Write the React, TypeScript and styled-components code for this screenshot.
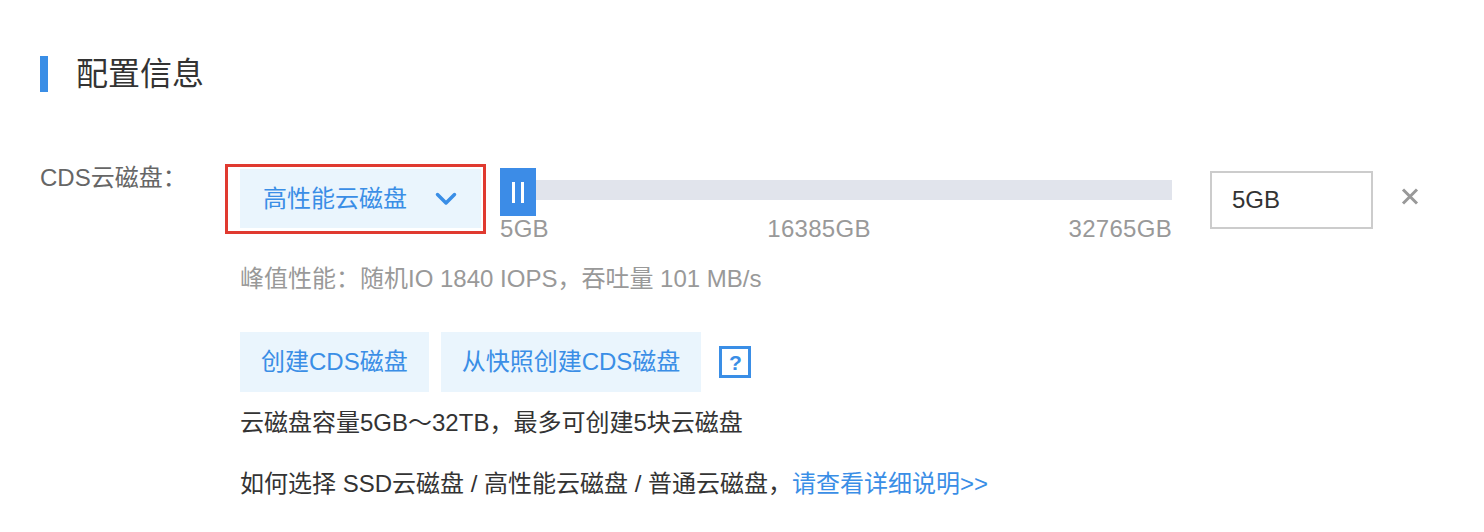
import styled, { createGlobalStyle } from "styled-components";

const GlobalStyle = createGlobalStyle`
  html, body {
    margin: 0;
    padding: 0;
    background: #fff;
  }
  body {
    font-family: "Liberation Sans", "Noto Sans CJK SC", sans-serif;
    color: #333;
  }
  * {
    box-sizing: border-box;
  }
`;

const BLUE = "#3a8ee6";
const LIGHT = "#eaf5fd";

const Page = styled.div`
  padding: 56px 0 0 40px;
  width: 1484px;
  height: 532px;
  overflow: hidden;
`;

const SectionTitle = styled.div`
  display: flex;
  align-items: center;
  gap: 28px;
  height: 36px;
`;

const TitleBar = styled.span`
  width: 8px;
  height: 36px;
  background: ${BLUE};
`;

const TitleText = styled.h2`
  margin: 0;
  font-size: 32px;
  line-height: 36px;
  font-weight: normal;
  color: #333;
`;

const Form = styled.div`
  display: grid;
  grid-template-columns: 200px 1fr;
  margin-top: 76px;
`;

const Label = styled.div`
  font-size: 24px;
  line-height: 20px;
  color: #666;
`;

const Field = styled.div`
  display: flex;
  flex-direction: column;
`;

const DiskRow = styled.div`
  display: flex;
  align-items: flex-start;
`;

const SelectWrap = styled.div`
  position: relative;
  margin-top: 1px;

  &::after {
    content: "";
    position: absolute;
    top: -5px;
    right: -5px;
    bottom: -6px;
    left: -15px;
    border: 3px solid #e03a30;
    pointer-events: none;
  }
`;

const Select = styled.div`
  width: 241px;
  height: 59px;
  padding: 0 24px 0 23px;
  display: flex;
  align-items: center;
  justify-content: space-between;
  background: ${LIGHT};
  color: ${BLUE};
  font-size: 24px;
  line-height: 30px;
  cursor: pointer;
`;

const Slider = styled.div`
  width: 672px;
  margin-left: 19px;
  display: flex;
  flex-direction: column;
`;

const TrackArea = styled.div`
  position: relative;
  height: 48px;
`;

const Track = styled.div`
  margin-top: 12px;
  height: 20px;
  background: #e1e4ec;
`;

const Handle = styled.div`
  position: absolute;
  left: 0;
  top: 0;
  width: 36px;
  height: 48px;
  background: #3c8ce7;
  display: flex;
  align-items: center;
  justify-content: center;
  gap: 6px;
`;

const Grip = styled.span`
  width: 3px;
  height: 21px;
  background: #fff;
`;

const Scale = styled.div`
  display: grid;
  grid-template-columns: 1fr auto 1fr;
  font-size: 24px;
  line-height: 26px;
  color: #999;
`;

const Tick = styled.span<{ $align: "left" | "center" | "right" }>`
  text-align: ${(p) => p.$align};
  margin-right: ${(p) => (p.$align === "center" ? "34px" : "0")};
  letter-spacing: 0.3px;
`;

const SizeInput = styled.input`
  width: 163px;
  height: 58px;
  margin: 3px 0 0 38px;
  padding: 0 0 0 20px;
  border: 2px solid #ccc;
  border-radius: 0;
  outline: none;
  font-family: "Liberation Sans", "Noto Sans CJK SC", sans-serif;
  font-size: 24px;
  color: #333;
  background: #fff;
`;

const Remove = styled.button`
  margin: 20px 0 0 28px;
  padding: 0;
  border: 0;
  background: none;
  width: 18px;
  height: 17px;
  display: flex;
  cursor: pointer;
`;

const Hint = styled.div`
  margin-top: 22px;
  font-size: 24px;
  line-height: 30px;
  color: #999;
`;

const Actions = styled.div`
  display: flex;
  align-items: center;
  margin-top: 38px;
  gap: 12px;
`;

const ActionButton = styled.button`
  height: 60px;
  padding: 0 21px;
  border: 0;
  background: ${LIGHT};
  color: ${BLUE};
  font-family: "Liberation Sans", "Noto Sans CJK SC", sans-serif;
  font-size: 24px;
  line-height: 30px;
  cursor: pointer;
`;

const HelpBox = styled.span`
  margin-left: 6px;
  width: 32px;
  height: 32px;
  border: 3px solid ${BLUE};
  color: ${BLUE};
  display: flex;
  align-items: center;
  justify-content: center;
  font-size: 21px;
  font-weight: bold;
  line-height: 1;
`;

const Note = styled.p<{ $gap: number }>`
  margin: ${(p) => p.$gap}px 0 0;
  font-size: 24px;
  line-height: 30px;
  color: #333;
`;

const Link = styled.a`
  color: ${BLUE};
  text-decoration: none;
`;

export default function App() {
  return (
    <Page>
      <GlobalStyle />
      <SectionTitle>
        <TitleBar />
        <TitleText>配置信息</TitleText>
      </SectionTitle>

      <Form>
        <Label>CDS云磁盘：</Label>
        <Field>
          <DiskRow>
            <SelectWrap>
              <Select>
                <span>高性能云磁盘</span>
                <svg width="22" height="14" viewBox="0 0 22 14">
                  <polyline
                    points="2.5,2.5 11,11 19.5,2.5"
                    fill="none"
                    stroke={BLUE}
                    strokeWidth="3.5"
                    strokeLinecap="round"
                    strokeLinejoin="round"
                  />
                </svg>
              </Select>
            </SelectWrap>

            <Slider>
              <TrackArea>
                <Track />
                <Handle>
                  <Grip />
                  <Grip />
                </Handle>
              </TrackArea>
              <Scale>
                <Tick $align="left">5GB</Tick>
                <Tick $align="center">16385GB</Tick>
                <Tick $align="right">32765GB</Tick>
              </Scale>
            </Slider>

            <SizeInput defaultValue="5GB" />

            <Remove aria-label="删除">
              <svg width="18" height="17" viewBox="0 0 18 17">
                <path d="M2 1.5 L16 15.5 M16 1.5 L2 15.5" stroke="#999" strokeWidth="3" />
              </svg>
            </Remove>
          </DiskRow>

          <Hint>峰值性能：随机IO 1840 IOPS，吞吐量 101 MB/s</Hint>

          <Actions>
            <ActionButton>创建CDS磁盘</ActionButton>
            <ActionButton>从快照创建CDS磁盘</ActionButton>
            <HelpBox>?</HelpBox>
          </Actions>

          <Note $gap={16}>云磁盘容量5GB～32TB，最多可创建5块云磁盘</Note>
          <Note $gap={31}>
            如何选择 SSD云磁盘 / 高性能云磁盘 / 普通云磁盘，
            <Link href="#">请查看详细说明&gt;&gt;</Link>
          </Note>
        </Field>
      </Form>
    </Page>
  );
}
